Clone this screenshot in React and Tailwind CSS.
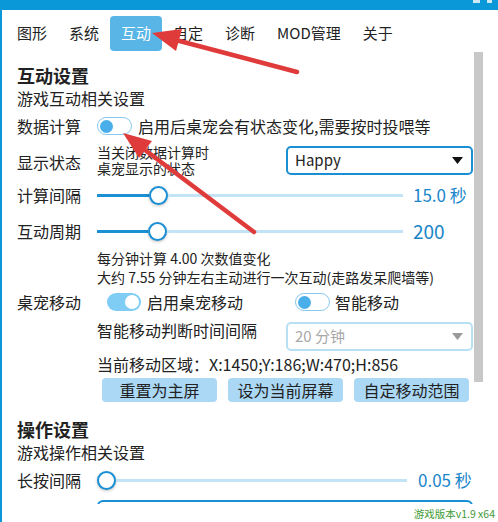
import React from "react";

const Toggle = ({ on, className = "" }) =>
  on ? (
    <div className={`w-[34px] h-[18px] rounded-full bg-[#7fcdf5] flex items-center justify-end pr-[2px] shrink-0 ${className}`}>
      <div className="w-[14px] h-[14px] rounded-full bg-white" />
    </div>
  ) : (
    <div className={`w-[35px] h-[18px] rounded-full border-[1.5px] border-[#86c8ee] bg-white flex items-center pl-[2px] shrink-0 ${className}`}>
      <div className="w-[13px] h-[13px] rounded-full bg-[#4aaeea]" />
    </div>
  );

const Slider = ({ fill }) => (
  <div className="flex-1 flex items-center">
    <div className={`h-[3px] bg-[#1a8fd4] ${fill}`} />
    <div className="w-[19px] h-[19px] rounded-full bg-white border-2 border-[#1a8fd4] shadow-[0_1px_3px_rgba(0,0,0,0.25)] shrink-0" />
    <div className="flex-1 h-[3px] bg-[#c3e4f6]" />
  </div>
);

const Arrows = () => (
  <svg className="absolute left-0 top-0 pointer-events-none" width="498" height="522">
    {/* arrow to tab */}
    <line x1="297" y1="72" x2="172" y2="39" stroke="#e03b3b" strokeWidth="4.5" strokeLinecap="round" />
    <polygon points="152,33 176,51 182,29" fill="#e03b3b" />
    {/* arrow to toggle */}
    <line x1="254" y1="232" x2="141" y2="147" stroke="#e03b3b" strokeWidth="4.5" strokeLinecap="round" />
    <polygon points="123,133 139,158 152,141" fill="#e03b3b" />
  </svg>
);

const tabs = ["图形", "系统", "互动", "自定", "诊断", "MOD管理", "关于"];

export default function App() {
  return (
    <div className="relative w-[498px] h-[522px] bg-white overflow-hidden font-['Noto_Sans_CJK_SC',sans-serif] text-[#222]">
      {/* title bar */}
      <div className="h-[10px] bg-[#0a98d8] flex justify-end items-start gap-[7px] pr-[6px]">
        <div className="w-[7px] h-[3px] bg-white/80" />
        <div className="w-[5px] h-[3px] bg-white/80" />
      </div>

      <div className="flex h-[512px] border-l-2 border-[#0a98d8]">
        <div className="w-[472px] flex flex-col">
          {/* tabs */}
          <div className="flex pl-[4px] mt-[6px] h-[35px] text-[15px]">
            {tabs.map((t) => (
              <div
                key={t}
                className={`px-[11px] flex items-center rounded-[4px] ${
                  t === "互动" ? "bg-[#58b5e5] text-white" : "text-[#222]"
                }`}
              >
                {t}
              </div>
            ))}
          </div>

          {/* scroll content */}
          <div className="h-[453px] overflow-hidden pl-[15px] pr-[1px]">
            <div className="mt-[12px] h-[24px] flex items-center text-[18px] font-bold">互动设置</div>
            <div className="h-[22px] flex items-center text-[16px]">游戏互动相关设置</div>

            <div className="h-[34px] flex items-center text-[16px]">
              <div className="w-[80px]">数据计算</div>
              <Toggle on={false} />
              <div className="ml-[6px]">启用后桌宠会有状态变化,需要按时投喂等</div>
            </div>

            <div className="h-[34px] flex items-center">
              <div className="w-[80px] text-[16px] pt-[4px]">显示状态</div>
              <div className="w-[189px] text-[14px] leading-[16px]">
                当关闭数据计算时
                <br />
                桌宠显示的状态
              </div>
              <div className="flex-1 h-[29px] border-2 border-[#1b8fd4] rounded-[5px] flex items-center justify-between pl-[7px] pr-[8px] text-[15px]">
                <span>Happy</span>
                <svg width="11" height="7" viewBox="0 0 11 7">
                  <polygon points="0,0 11,0 5.5,7" fill="#111" />
                </svg>
              </div>
            </div>

            <div className="h-[36px] flex items-center">
              <div className="w-[80px] text-[16px]">计算间隔</div>
              <Slider fill="w-[52px]" />
              <div className="w-[70px] pl-[10px] text-[17px] text-[#1a86c9]">15.0 秒</div>
            </div>

            <div className="h-[36px] flex items-center">
              <div className="w-[80px] text-[16px]">互动周期</div>
              <Slider fill="w-[51px]" />
              <div className="w-[70px] pl-[10px] text-[19px] text-[#1a86c9]">200</div>
            </div>

            <div className="pl-[80px] text-[14px] leading-[19px]">
              <div>每分钟计算 4.00 次数值变化</div>
              <div>大约 7.55 分钟左右主动进行一次互动(走路发呆爬墙等)</div>
            </div>

            <div className="h-[30px] flex items-center text-[16px]">
              <div className="w-[90px]">桌宠移动</div>
              <Toggle on />
              <div className="ml-[6px] w-[148px]">启用桌宠移动</div>
              <Toggle on={false} />
              <div className="ml-[5px]">智能移动</div>
            </div>

            <div className="h-[38px] flex">
              <div className="pl-[80px] w-[269px] text-[16px] leading-[20px] pt-[3px]">智能移动判断时间间隔</div>
              <div className="flex-1 self-center h-[29px] border-2 border-[#b8e0f5] rounded-[5px] flex items-center justify-between pl-[7px] pr-[8px] text-[15px] text-[#a8a8a8]">
                <span>20 分钟</span>
                <svg width="11" height="7" viewBox="0 0 11 7">
                  <polygon points="0,0 11,0 5.5,7" fill="#9a9a9a" />
                </svg>
              </div>
            </div>

            <div className="h-[18px] flex items-center pl-[80px] text-[16px]">当前移动区域：X:1450;Y:186;W:470;H:856</div>

            <div className="mt-[5px] flex gap-[11px] pl-[85px] text-[16px]">
              {["重置为主屏", "设为当前屏幕", "自定移动范围"].map((b) => (
                <div key={b} className="w-[115px] h-[24px] rounded-[4px] bg-[#abd8f5] flex items-center justify-center">
                  {b}
                </div>
              ))}
            </div>

            <div className="mt-[15px] h-[24px] flex items-center text-[18px] font-bold">操作设置</div>
            <div className="h-[22px] flex items-center text-[16px]">游戏操作相关设置</div>

            <div className="h-[34px] flex items-center">
              <div className="w-[80px] text-[16px]">长按间隔</div>
              <Slider fill="w-[0px]" />
              <div className="w-[66px] pl-[11px] text-[17px] text-[#1a86c9]">0.05 秒</div>
            </div>

            <div className="mt-[3px] ml-[80px] h-[10px] border-2 border-[#1a8fd4] rounded-t-[6px]" />
          </div>

          {/* footer */}
          <div className="flex-1 flex justify-end items-start pt-[4px]">
            <div className="text-[10.5px] leading-[12px] text-[#3e9a34] -mr-[21px]">游戏版本v1.9 x64</div>
          </div>
        </div>

        {/* scrollbar */}
        <div className="w-[10px] pt-[42px]">
          <div className="w-[9px] h-[330px] bg-[#c8c8c8]" />
        </div>
        <div className="flex-1" />
      </div>

      <Arrows />
    </div>
  );
}
